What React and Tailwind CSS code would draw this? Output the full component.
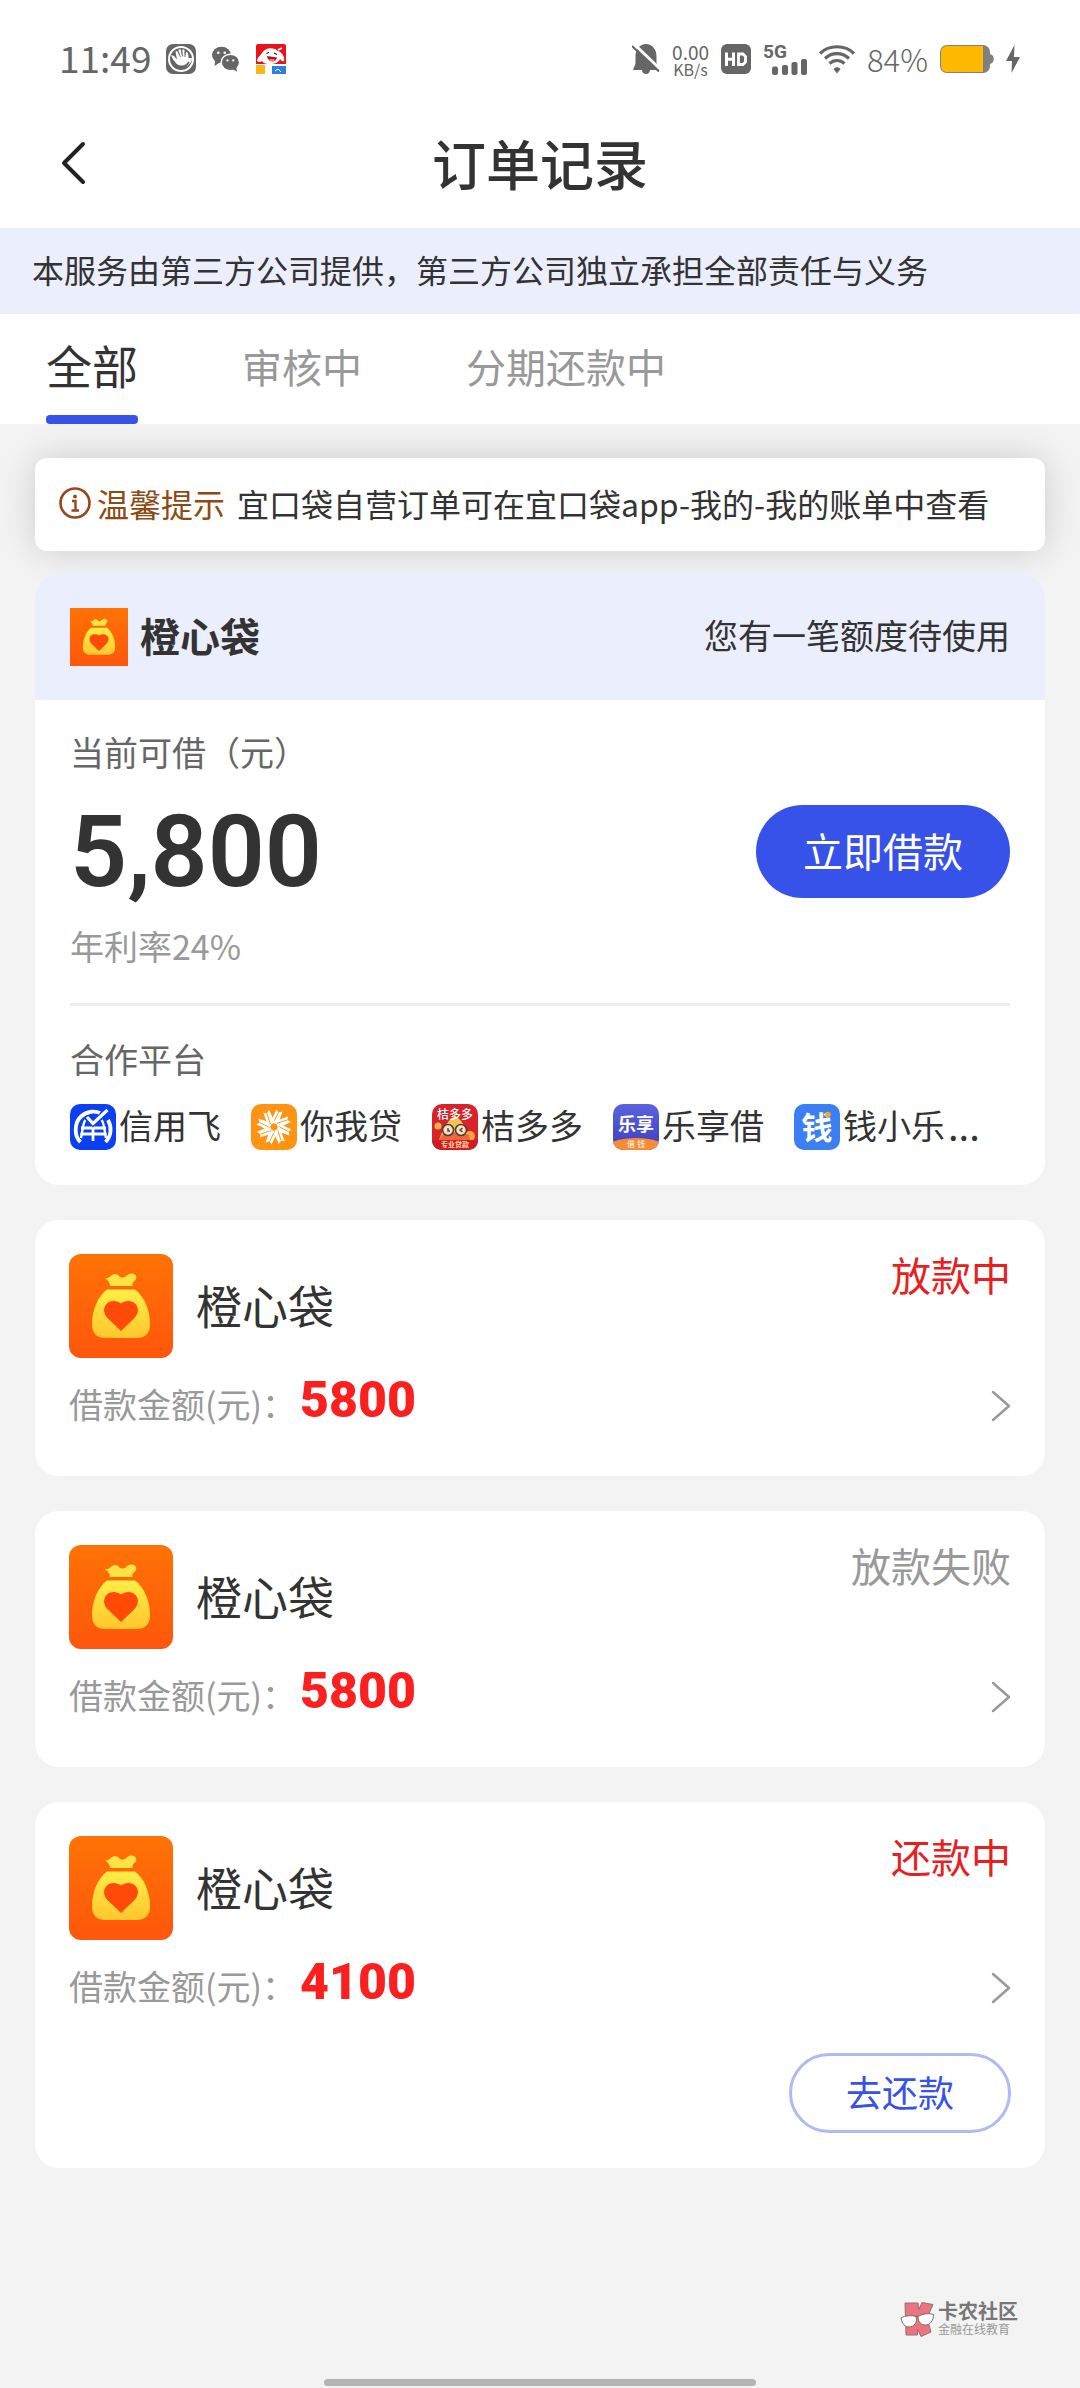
// src/App.jsx
import React from 'react';

const tabs = [
  { id: 'all', label: '全部' },
  { id: 'review', label: '审核中' },
  { id: 'repaying', label: '分期还款中' },
];

const orders = [
  { id: 1, name: '橙心袋', amount: '5800', status: '放款中', active: true },
  { id: 2, name: '橙心袋', amount: '5800', status: '放款失败', active: false },
  { id: 3, name: '橙心袋', amount: '4100', status: '还款中', active: true, action: '去还款' },
];

/* ---------- Status bar icons ---------- */

const PalmIcon = () => (
  <svg className="w-[30px] h-[30px]" viewBox="0 0 30 30" aria-hidden="true">
    <rect width="30" height="30" rx="7" fill="#666" />
    <circle cx="15" cy="15" r="12" fill="none" stroke="#fff" strokeWidth="2" />
    <path
      d="M5 11 L8 12 L11 15.500 L9.500 7.500 L11.300 7 L13.400 12 L12.600 5.500 L14.600 5.200 L16.200 11.500 L16.400 5.500 L18.400 5.800 L19 12 L20.200 8 L22 8.800 L22.600 14 L26 14 C26 20 20 24 15 22 C10 21 7 16 5 11 Z"
      fill="#fff"
    />
    <path d="M7.500 17 C10 23.500 19 24.500 23 18" fill="none" stroke="#666" strokeWidth="1.600" />
    <path d="M12.500 8 L14.500 13 M15.500 7 L16.800 12.500 M19 8 L19 13" stroke="#666" strokeWidth="0.900" />
  </svg>
);

const WechatIcon = () => (
  <svg className="w-[30px] h-[30px]" viewBox="0 0 30 30" aria-hidden="true">
    <ellipse cx="10.500" cy="11" rx="9.500" ry="8.300" fill="#666" />
    <path d="M4 16 L3.600 22 L9.500 18 Z" fill="#666" />
    <ellipse cx="19.400" cy="18.400" rx="9.200" ry="8.200" fill="#666" stroke="#fff" strokeWidth="1.400" />
    <path d="M21 25 L26 27.500 L25.200 23 Z" fill="#666" />
    <circle cx="7.300" cy="8.800" r="1.300" fill="#fff" />
    <circle cx="13.700" cy="8.800" r="1.300" fill="#fff" />
    <circle cx="16.500" cy="16.400" r="1.100" fill="#fff" />
    <circle cx="22.300" cy="16.400" r="1.100" fill="#fff" />
  </svg>
);

const DogIcon = () => (
  <svg className="w-[30px] h-[30px]" viewBox="0 0 30 30" aria-hidden="true">
    <rect width="30" height="30" rx="2" fill="#e8141c" />
    <rect y="20" width="30" height="10" fill="#fff" />
    <rect y="21" width="9" height="9" fill="#fbb61a" />
    <rect x="16" y="22" width="14" height="8" fill="#2f7fe0" />
    <path
      d="M6 9 C9 3 18 3 22 7 C26 8 29 13 28 17 C26 18 25 16 24 15 C22 21 9 22 6 17 C4 19 1 18 1 16 C2 13 4 12 6 9 Z"
      fill="#fff"
    />
    <path d="M11 12 L21 13.500 C20 19 12 19 11 12 Z" fill="#b3121c" />
    <path d="M13 15.500 C15 14.500 17.500 15 19 16 C17 18.500 14 17.500 13 15.500 Z" fill="#ff7d86" />
    <path d="M10.500 9.500 L13 8.300 M18 9 L21 10.500" stroke="#222" strokeWidth="1.200" />
    <path d="M22 6 L26 4" stroke="#fff" strokeWidth="1.400" />
    <path d="M19 27 L22 25 L25 28" stroke="#fff" strokeWidth="1" fill="none" />
  </svg>
);

const MuteIcon = () => (
  <svg className="w-[28px] h-[30px]" viewBox="0 0 28 30" aria-hidden="true">
    <path
      d="M1 26 C1 24 3.500 22 3.500 19 V12 C3.500 5 8 0 14 0 C20 0 24.500 5 24.500 12 V19 C24.500 22 27 24 27 26 H18 C18 28 16.500 30 14 30 C11.500 30 10 28 10 26 Z"
      fill="#666"
    />
    <path d="M2 0 L28 25" stroke="#fff" strokeWidth="3" />
    <path d="M0 2 L27 27.500" stroke="#666" strokeWidth="2" />
  </svg>
);

const HdIcon = () => (
  <svg className="w-[30px] h-[30px]" viewBox="0 0 30 30" aria-hidden="true">
    <rect width="30" height="30" rx="6" fill="#666" />
    <path d="M5.500 8.500 V22 M12.500 8.500 V22 M5.500 15.200 H12.500" stroke="#fff" strokeWidth="3" fill="none" />
    <path d="M17.500 10 H22 L24.500 12.500 V18 L22 20.500 H17.500 Z" stroke="#fff" strokeWidth="2.800" fill="none" />
  </svg>
);

const SignalBars = () => (
  <svg className="ml-[9px] h-4 w-[35px]" viewBox="0 0 35 16" aria-hidden="true">
    <rect x="0" y="7.500" width="6" height="8.500" rx="2" fill="#666" />
    <rect x="10" y="6" width="6" height="10" rx="2" fill="#666" />
    <rect x="19.500" y="3" width="6" height="13" rx="2" fill="#666" />
    <rect x="29" y="0" width="6" height="16" rx="2" fill="#666" />
  </svg>
);

const WifiIcon = () => (
  <svg className="w-[36px] h-[30px]" viewBox="0 0 36 30" aria-hidden="true">
    <g fill="none" stroke="#666" strokeWidth="3.200">
      <path d="M1 9.500 C10 0.500 26 0.500 35 9.500" />
      <path d="M6 14.500 C13 8 23 8 30 14.500" />
      <path d="M10.500 19.500 C15 15.500 21 15.500 25.500 19.500" />
    </g>
    <path d="M14.500 25 C16.500 22.500 19.500 22.500 21.500 25 L18 29.500 Z" fill="#666" />
  </svg>
);

const BatteryIcon = () => (
  <svg className="w-[54px] h-[28px]" viewBox="0 0 54 28" aria-hidden="true">
    <rect width="50" height="28" rx="7" fill="#808080" />
    <path d="M7 1 H43 V27 H7 C3.500 27 1 24.500 1 21 V7 C1 3.500 3.500 1 7 1 Z" fill="#ffb900" />
    <path d="M50 9 C55 10 55 18 50 19 Z" fill="#808080" />
  </svg>
);

const BoltIcon = () => (
  <svg className="w-[14px] h-[28px]" viewBox="0 0 14 28" aria-hidden="true">
    <path d="M8.500 0 L0 16 H6 L5.500 28 L14 12 H8 Z" fill="#666" />
  </svg>
);

/* ---------- Brand icons ---------- */

const BagIcon = ({ className }) => (
  <svg className={className} viewBox="0 0 104 104" aria-hidden="true">
    <defs>
      <linearGradient id="bagBg" x1="0" y1="0" x2="0" y2="1">
        <stop offset="0" stopColor="#ff7305" />
        <stop offset="1" stopColor="#ff560c" />
      </linearGradient>
      <linearGradient id="bagFill" x1="0" y1="0" x2="0" y2="1">
        <stop offset="0" stopColor="#ffee45" />
        <stop offset="1" stopColor="#ffc62e" />
      </linearGradient>
    </defs>
    <rect width="104" height="104" fill="url(#bagBg)" />
    <path
      d="M36 24 C41 25 42 20 46 20 C50 20 50 24 54 23.500 C58 23 58 19 63 19.500 C67 20 68 23 67 25 C66 27 63 28 63.500 32 H41 C41 28 38 26 36 24 Z"
      fill="#ffe344"
    />
    <path
      d="M38 35.500 H66 C75 42 81 56 81 70 C81 80 76 84 67 84 H37 C28 84 23 80 23 70 C23 56 29 42 38 35.500 Z"
      fill="url(#bagFill)"
    />
    <path
      d="M52 77 L38.500 64 C34 59.500 34 53 38 49.500 C42 46 48 46.500 52 49.500 C56 46.500 62 46 66 49.500 C70 53 70 59.500 65.500 64 Z"
      fill="#ff4a08"
    />
  </svg>
);

const XinyongfeiIcon = () => (
  <svg className="w-[46px] h-[46px]" viewBox="0 0 46 46" aria-hidden="true">
    <rect width="46" height="46" rx="10" fill="#0a40f2" />
    <path d="M10.500 38 C4 32 4 19 11 12.500 C17 7 25 6.500 30 9 M38 16 C42 23 41.500 32 35.500 38" fill="none" stroke="#fff" strokeWidth="3.800" />
    <path d="M11 24 H36 M10.500 30 H36.500 M23 20 V37" fill="none" stroke="#fff" strokeWidth="2.800" />
    <path d="M15.500 16 C12.500 19 12.500 28 11 34 M31.500 16 C34.500 19 34.500 28 36 34" fill="none" stroke="#fff" strokeWidth="2.400" />
    <path d="M17 13 L23 19.500 L37.500 6" fill="none" stroke="#0a40f2" strokeWidth="5.600" />
    <path d="M17 13 L23 19.500 L37.500 6" fill="none" stroke="#fff" strokeWidth="3.200" />
  </svg>
);

const NiwodaiIcon = () => (
  <svg className="w-[46px] h-[46px]" viewBox="0 0 46 46" aria-hidden="true">
    <rect width="46" height="46" rx="10" fill="#ff9312" />
    {[0, 45, 90, 135, 180, 225, 270, 315].map((deg) => (
      <g key={deg} transform={`rotate(${deg} 23 23)`}>
        <path d="M19 19 L25.500 5.500 L27.500 8.500 L31.500 7.500 L27 20 Z" fill="#fff" />
        <path d="M27.500 8.500 L22.500 18.500" stroke="#ff9312" strokeWidth="0.900" />
      </g>
    ))}
    <path d="M23 19.300 L26.200 21.200 V24.800 L23 26.700 L19.800 24.800 V21.200 Z" fill="#ff9312" />
  </svg>
);

const JuduoduoIcon = () => (
  <svg className="w-[46px] h-[46px]" viewBox="0 0 46 46" aria-hidden="true">
    <rect width="46" height="46" rx="10" fill="#d8232a" />
    <circle cx="6" cy="22" r="3.500" fill="#f7b04a" />
    <circle cx="38" cy="32" r="5" fill="#f7a53c" />
    <path d="M23 12 C28 14 34 22 38 36 H7 C12 22 17 15 23 12 Z" fill="#f4c44e" />
    <path d="M10 31 C16 27 30 27 37 31 L38 36 H7 Z" fill="#f0653c" />
    <circle cx="16" cy="26" r="5.500" fill="#f8e3c0" stroke="#444" strokeWidth="1.600" />
    <circle cx="29" cy="26" r="5.500" fill="#f8e3c0" stroke="#444" strokeWidth="1.600" />
    <path d="M16 24 V27 H18 M30.500 24 L28 26 L30.500 28" stroke="#7a2b1b" strokeWidth="1.400" fill="none" />
    <path d="M0 36 H46 C46 42 42 46 36 46 H10 C4 46 0 42 0 36 Z" fill="#cf1b24" />
    <text x="23" y="15" textAnchor="middle" fontSize="12" fontWeight="500" fill="#fff" fontFamily="Noto Sans CJK SC, sans-serif">桔多多</text>
    <text x="23" y="43" textAnchor="middle" fontSize="7" fontWeight="700" fill="#ffd9a0" fontFamily="Noto Sans CJK SC, sans-serif">专业贷款</text>
  </svg>
);

const LexiangIcon = () => (
  <svg className="w-[46px] h-[46px]" viewBox="0 0 46 46" aria-hidden="true">
    <defs>
      <clipPath id="lexiangClip">
        <rect width="46" height="46" rx="10" />
      </clipPath>
      <linearGradient id="lexiangBg" x1="0" y1="0" x2="0" y2="1">
        <stop offset="0" stopColor="#5a63dd" />
        <stop offset="1" stopColor="#3a3fc4" />
      </linearGradient>
    </defs>
    <g clipPath="url(#lexiangClip)">
      <rect width="46" height="46" fill="url(#lexiangBg)" />
      <ellipse cx="23" cy="46" rx="32" ry="12" fill="#fb8a34" />
    </g>
    <text x="23" y="27" textAnchor="middle" fontSize="18" fontWeight="700" fill="#fff" fontFamily="Noto Sans CJK SC, sans-serif">乐享</text>
    <text x="23" y="43" textAnchor="middle" fontSize="8" fill="#fff" fontFamily="Noto Sans CJK SC, sans-serif">借 钱</text>
  </svg>
);

const QianIcon = () => (
  <svg className="w-[46px] h-[46px]" viewBox="0 0 46 46" aria-hidden="true">
    <rect width="46" height="46" rx="10" fill="#3b7ff3" />
    <text x="23" y="35" textAnchor="middle" fontSize="31" fontWeight="700" fill="#fff" fontFamily="Noto Sans CJK SC, sans-serif">钱</text>
    <circle cx="34" cy="10.500" r="2.800" fill="#f5a623" />
  </svg>
);

const WatermarkLogo = () => (
  <svg className="w-[34px] h-[35px]" viewBox="0 0 34 35" aria-hidden="true">
    <path d="M5 1 H18 L18.500 8 L22 0.500 L33 2.500 L27 16 L31 30 L21 34.500 L17.500 27 V33 H6 Z" fill="#ee7280" stroke="#8a7577" strokeWidth="1" />
    <path d="M1 16 C5 13.500 12 13 16 14.500 C18 20 14 25 9 25 C5 25 2 22 1 16 Z" fill="#fff" stroke="#6f6f6f" strokeWidth="1" />
    <path d="M18 14.500 C23 11.500 29 11 33.500 12.500 C33.500 19 30 23 25.500 23 C21 23 18 20 18 14.500 Z" fill="#fff" stroke="#6f6f6f" strokeWidth="1" />
    <path d="M16 14.500 L18 14.500" stroke="#6f6f6f" strokeWidth="1.500" />
  </svg>
);

const partners = [
  { name: '信用飞', Icon: XinyongfeiIcon },
  { name: '你我贷', Icon: NiwodaiIcon },
  { name: '桔多多', Icon: JuduoduoIcon },
  { name: '乐享借', Icon: LexiangIcon },
  { name: '钱小乐', Icon: QianIcon },
];

/* ---------- Sections ---------- */

const StatusBar = () => (
  <div className="flex h-[118px] items-center justify-between pr-[60px] pl-[59px] text-[#666]">
    <div className="flex items-center gap-[15px]">
      <span className="pb-1 text-[37px] leading-[40px]">11:49</span>
      <PalmIcon />
      <WechatIcon />
      <DogIcon />
    </div>
    <div className="flex items-center gap-3">
      <MuteIcon />
      <span className="flex flex-col text-center">
        <span className="text-[19px] leading-[19px]">0.00</span>
        <span className="text-[16px] leading-[16px]">KB/s</span>
      </span>
      <HdIcon />
      <span className="flex flex-col">
        <span className="font-[Roboto] text-[19px] leading-[15px] font-bold">5G</span>
        <SignalBars />
      </span>
      <WifiIcon />
      <span className="text-[31px] leading-[40px] font-light">84%</span>
      <BatteryIcon />
      <BoltIcon />
    </div>
  </div>
);

const NavBar = () => (
  <header className="grid h-[110px] grid-cols-[1fr_auto_1fr] items-center px-[56px] pb-5">
    <button type="button" aria-label="返回" className="justify-self-start">
      <svg className="h-[44px] w-[32px]" viewBox="0 0 32 44" fill="none" aria-hidden="true">
        <path d="M27 3 L8 22 L27 41" stroke="#222" strokeWidth="4" strokeLinecap="round" strokeLinejoin="round" />
      </svg>
    </button>
    <h1 className="text-[54px] leading-[60px] font-medium">订单记录</h1>
  </header>
);

const Tabs = () => (
  <nav className="flex h-[110px] items-stretch gap-[104px] bg-white px-[46px]">
    {tabs.map((tab, index) => (
      <button
        key={tab.id}
        type="button"
        className={
          index === 0
            ? 'flex flex-col items-center justify-between pt-5 text-[46px] leading-[60px]'
            : 'flex flex-col items-center pt-[22px] text-[40px] leading-[60px] text-[#999]'
        }
      >
        {tab.label}
        {index === 0 && <span className="h-[9px] w-full rounded bg-[#3652e8]" />}
      </button>
    ))}
  </nav>
);

const Tip = () => (
  <div className="flex h-[93px] items-center rounded-xl bg-white px-6 pb-1 text-[32px] leading-[48px] shadow-[0_0_36px_rgba(0,0,0,0.16)]">
    <svg className="mr-[6px] h-8 w-8 shrink-0" viewBox="0 0 32 32" fill="none" aria-hidden="true">
      <circle cx="16" cy="16" r="14.500" stroke="#97481d" strokeWidth="2.600" />
      <circle cx="16" cy="9.500" r="1.900" fill="#97481d" />
      <path d="M13 14 H16.500 V23 M12.500 23.500 H20" stroke="#97481d" strokeWidth="2.400" />
    </svg>
    <strong className="mr-3 shrink-0 font-normal text-[#8d4a12]">温馨提示</strong>
    <span className="min-w-0 whitespace-nowrap">宜口袋自营订单可在宜口袋app-我的-我的账单中查看</span>
  </div>
);

const QuotaCard = () => (
  <section className="mt-[22px] overflow-hidden rounded-3xl bg-white">
    <div className="flex h-[127px] items-center bg-[#ebeefd] px-[35px]">
      <BagIcon className="h-[58px] w-[58px]" />
      <h2 className="ml-3 pb-1 text-[40px] leading-[48px] font-bold">橙心袋</h2>
      <p className="ml-auto pb-1 text-[34px] leading-[48px]">您有一笔额度待使用</p>
    </div>
    <div className="px-[35px] pt-7 pb-[35px]">
      <p className="text-[34px] leading-[48px] text-[#666]">当前可借（元）</p>
      <div className="mt-[29px] flex h-[93px] items-center justify-between">
        <span className="font-[Roboto] text-[100px] leading-[93px] font-semibold">5,800</span>
        <button type="button" className="h-[93px] rounded-full bg-[#3652e8] px-[47px] pb-1 text-[40px] leading-[48px] text-white">
          立即借款
        </button>
      </div>
      <p className="mt-6 text-[34px] leading-[48px] text-[#999]">年利率24%</p>
      <hr className="mt-[33px] border-t-[3px] border-[#eee]" />
      <p className="mt-[29px] text-[34px] leading-[48px] text-[#666]">合作平台</p>
      <ul className="mt-[21px] flex items-center gap-[30px] text-[34px] leading-[42px]">
        {partners.map(({ name, Icon }, index) => (
          <li key={name} className="flex shrink-0 items-center gap-[3px]">
            <Icon />
            <span className="pb-1">{name}</span>
            {index === partners.length - 1 && <span className="pb-1 text-[38px]">...</span>}
          </li>
        ))}
      </ul>
    </div>
  </section>
);

const OrderCard = ({ order }) => {
  const { name, amount, status, active, action } = order;

  return (
    <article className="mt-[35px] rounded-3xl bg-white px-[34px] pt-[34px] pb-[35px]">
      <div className="flex items-start justify-between">
        <div className="flex items-center gap-[23px]">
          <BagIcon className="h-[104px] w-[104px] rounded-xl" />
          <h2 className="pb-1 text-[46px] leading-[60px]">{name}</h2>
        </div>
        <span className={active ? 'text-[40px] leading-[40px] text-[#e81f1f]' : 'text-[40px] leading-[40px] text-[#999]'}>
          {status}
        </span>
      </div>
      <a href="#order" className="mt-[18px] mb-[17px] flex h-[48px] items-end">
        <span className="text-[34px] leading-[40px] text-[#999]">借款金额(元)：</span>
        <span className="ml-1 font-[Roboto] text-[50px] leading-[48px] font-black text-[#fb2020]">{amount}</span>
        <svg className="ml-auto h-[34px] w-[20px]" viewBox="0 0 20 34" fill="none" aria-hidden="true">
          <path d="M2 2 L18 16 L2 30" stroke="#999" strokeWidth="2.500" strokeLinecap="round" strokeLinejoin="round" />
        </svg>
      </a>
      {action && (
        <div className="flex justify-end pt-[30px]">
          <button type="button" className="h-[80px] rounded-full border-[3px] border-[#b0baf3] px-[54px] pb-1 text-[36px] leading-[48px] text-[#3652e8]">
            {action}
          </button>
        </div>
      )}
    </article>
  );
};

const App = () => {
  return (
    <div className="flex min-h-screen flex-col bg-[#f3f3f3] font-['Noto_Sans_CJK_SC',sans-serif] text-[#333]">
      <div className="bg-white">
        <StatusBar />
        <NavBar />
      </div>
      <p className="bg-[#ebeefd] px-8 pt-[17px] pb-[21px] text-[32px] leading-[48px]">
        本服务由第三方公司提供，第三方公司独立承担全部责任与义务
      </p>
      <Tabs />
      <main className="px-[35px] pt-[34px]">
        <Tip />
        <QuotaCard />
        {orders.map((order) => (
          <OrderCard key={order.id} order={order} />
        ))}
      </main>
      <footer className="mt-auto pb-[2px]">
        <div className="flex items-center justify-end gap-1 pr-[62px] text-[#777]">
          <WatermarkLogo />
          <div>
            <p className="text-[20px] leading-5 font-bold">卡农社区</p>
            <p className="text-[12px] leading-4 text-[#999]">金融在线教育</p>
          </div>
        </div>
        <div className="mx-auto mt-[42px] h-[7px] w-2/5 rounded-full bg-[#b4b4b4]" />
      </footer>
    </div>
  );
};

export default App;
